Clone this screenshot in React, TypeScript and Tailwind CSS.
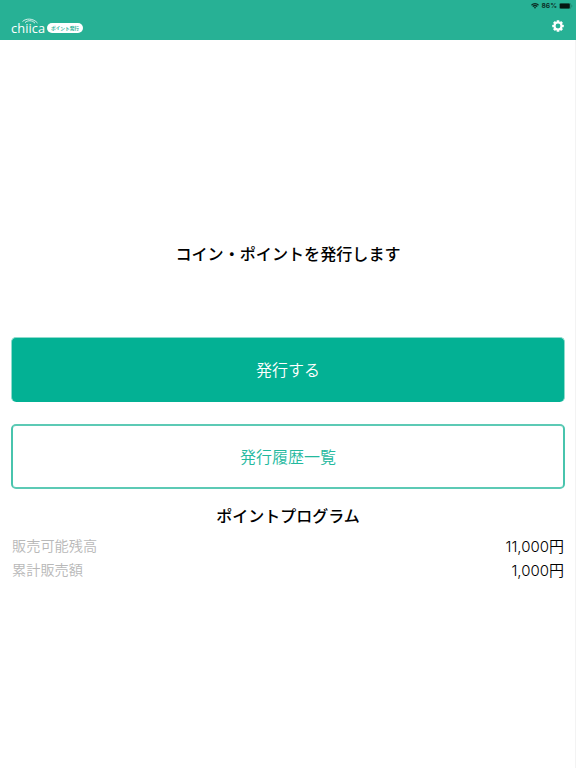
import React from "react";

function Wifi() {
  return (
    <svg width="8" height="6" viewBox="0 0 16 12" fill="none" stroke="#0b2b23" strokeWidth="2.6">
      <path d="M1 4.400a10 10 0 0 1 14 0" />
      <path d="M3.600 7.200a6.300 6.300 0 0 1 8.800 0" />
      <path d="M5.600 9l2.400 2.600L10.400 9a3.600 3.600 0 0 0-4.800 0z" fill="#0b2b23" stroke="none" />
    </svg>
  );
}

function Gear() {
  return (
    <svg width="12" height="12" viewBox="0 0 24 24">
      <g fill="white">
        {[0, 45, 90, 135].map((a) => (
          <rect key={a} x="9.3" y="0.5" width="5.4" height="23" rx="1" transform={`rotate(${a} 12 12)`} />
        ))}
        <circle cx="12" cy="12" r="9" />
      </g>
      <circle cx="12" cy="12" r="4.900" fill="#27b195" />
    </svg>
  );
}

function Header() {
  return (
    <header className="flex h-10 flex-col bg-[#27b195]">
      <div className="flex h-3 items-center justify-end pr-[3px] text-[#0b2b23]">
        <Wifi />
        <span className="ml-[2px] font-['Inter','Liberation_Sans',sans-serif] text-[6.800px] leading-3 font-semibold">86%</span>
        <svg className="ml-[2px]" width="14" height="6" viewBox="0 0 14 6">
          <rect x="0.3" y="0.3" width="11.600" height="5.4" rx="1.600" fill="none" stroke="#19775f" strokeWidth="0.6" />
          <rect x="0.8" y="0.600" width="10" height="4.800" rx="1" fill="#051511" />
          <path d="M12.600 2v2a1.200 1.200 0 0 0 0-2z" fill="#19775f" />
        </svg>
      </div>
      <div className="flex h-7 items-start justify-between pr-3 pl-[11px]">
        <div className="flex items-start">
          <div className="relative h-[22px] w-[35px]">
            <span className="absolute top-[9px] left-0 font-['Open_Sans','Noto_Sans',sans-serif] text-[12.800px] leading-[14px] font-medium tracking-[0.1px] text-white">chiica</span>
            <svg className="absolute top-[6px] left-[11px]" width="16" height="7" viewBox="0 0 16 7" fill="none" stroke="white" strokeWidth="0.8">
              <path d="M0.500 3.500C4 0.200 11 0 15.500 5" />
              <path d="M3 4.600C6 2 10 2 13 5.200" />
            </svg>
          </div>
          <span className="mt-[11px] ml-[1px] flex h-[10px] w-9 items-center justify-center rounded-full bg-white font-['Noto_Sans_CJK_JP',sans-serif] text-[4.700px] leading-none font-bold whitespace-nowrap text-[#27b195]">
            ポイント発行
          </span>
        </div>
        <div className="mt-[7.500px]"><Gear /></div>
      </div>
    </header>
  );
}

function Row({ label, value }: { label: string; value: string }) {
  return (
    <div className="flex h-6 items-center justify-between">
      <span className="pb-[2px] text-[14.200px] font-[350] text-[#b8b8b8]">{label}</span>
      <span className="font-['Inter','Noto_Sans_CJK_JP',sans-serif] text-[15px] font-[350] text-black">{value}</span>
    </div>
  );
}

export default function App() {
  return (
    <div className="flex h-[768px] w-[576px] flex-col overflow-hidden bg-white font-['Noto_Sans_CJK_JP',sans-serif]">
      <Header />
      <main className="flex flex-1 flex-col border-r border-[#f3f3f3] pr-[10px] pl-[11px]">
        <h1 className="mt-[201px] text-center text-[16.080px] leading-6 font-medium text-black">コイン・ポイントを発行します</h1>
        <button className="mt-[72px] h-[65px] w-full shrink-0 rounded-[5px] border-x border-t border-[#8edccd] bg-[#03b194] pb-[2px] text-[16px] font-[350] text-white">発行する</button>
        <button className="mt-[22px] h-[65px] w-full shrink-0 rounded-[5px] border-2 border-x-[#48c4ad] border-y-[#5ccab5] pb-[2px] text-[16px] font-[350] text-[#24b99e]">発行履歴一覧</button>
        <h2 className="mt-[14px] text-center text-[16px] leading-6 font-medium text-black">ポイントプログラム</h2>
        <section className="mt-[8px] px-px">
          <Row label="販売可能残高" value="11,000円" />
          <Row label="累計販売額" value="1,000円" />
        </section>
      </main>
    </div>
  );
}
